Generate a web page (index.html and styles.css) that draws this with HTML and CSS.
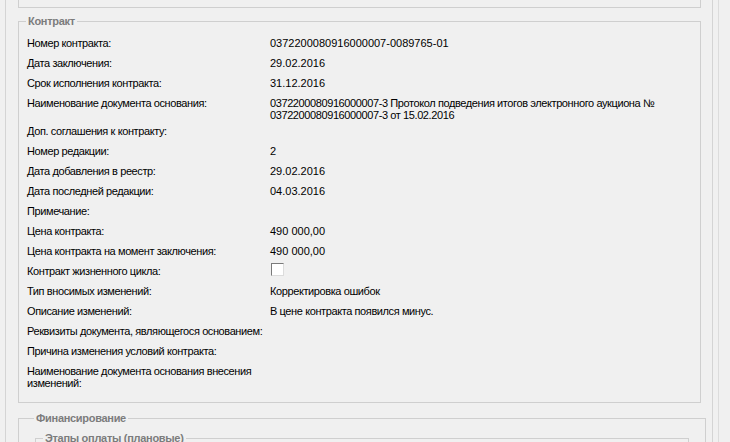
FILE: index.html
```html
<!DOCTYPE html>
<html lang="ru">
<head>
  <meta charset="UTF-8" />
  <title>Контракт</title>
  <link rel="stylesheet" href="styles.css">
</head>
<body>
  <div class="frame">
    <div class="page">
      <div class="prev-box"></div>

      <fieldset class="group contract">
        <legend>Контракт</legend>
        <div class="row"><div class="label">Номер контракта:</div><div class="value num">0372200080916000007-0089765-01</div></div>
        <div class="row"><div class="label">Дата заключения:</div><div class="value num">29.02.2016</div></div>
        <div class="row"><div class="label">Срок исполнения контракта:</div><div class="value num">31.12.2016</div></div>
        <div class="row"><div class="label">Наименование документа основания:</div><div class="value">0372200080916000007-3 Протокол подведения итогов электронного аукциона № 0372200080916000007-3 от 15.02.2016</div></div>
        <div class="row"><div class="label">Доп. соглашения к контракту:</div><div class="value"></div></div>
        <div class="row"><div class="label">Номер редакции:</div><div class="value num">2</div></div>
        <div class="row"><div class="label">Дата добавления в реестр:</div><div class="value num">29.02.2016</div></div>
        <div class="row"><div class="label">Дата последней редакции:</div><div class="value num">04.03.2016</div></div>
        <div class="row"><div class="label">Примечание:</div><div class="value"></div></div>
        <div class="row"><div class="label">Цена контракта:</div><div class="value num">490 000,00</div></div>
        <div class="row"><div class="label">Цена контракта на момент заключения:</div><div class="value num">490 000,00</div></div>
        <div class="row"><div class="label">Контракт жизненного цикла:</div><div class="value"><span class="checkbox"></span></div></div>
        <div class="row"><div class="label">Тип вносимых изменений:</div><div class="value">Корректировка ошибок</div></div>
        <div class="row"><div class="label">Описание изменений:</div><div class="value">В цене контракта появился минус.</div></div>
        <div class="row"><div class="label">Реквизиты документа, являющегося основанием:</div><div class="value"></div></div>
        <div class="row"><div class="label">Причина изменения условий контракта:</div><div class="value"></div></div>
        <div class="row"><div class="label">Наименование документа основания внесения изменений:</div><div class="value"></div></div>
      </fieldset>

      <fieldset class="group finance">
        <legend>Финансирование</legend>
        <fieldset class="group stages">
          <legend>Этапы оплаты (плановые)</legend>
        </fieldset>
      </fieldset>
    </div>
  </div>
</body>
</html>
```

FILE: styles.css
```css
body {
  margin: 0;
  background: #f0f0f0;
  font-family: "Liberation Sans", Arial, sans-serif;
  font-size: 11px;
  color: #000;
  overflow: hidden;
}

.frame {
  width: 718px;
  height: 442px;
  overflow: hidden;
  border-right: 1px solid #dcdcdc;
}

.page {
  margin-left: 5px;
  width: 708px;
  height: 442px;
  padding: 0 0 0 12px;
  box-sizing: border-box;
  border-left: 1px solid #d4d4d4;
  border-right: 1px solid #d4d4d4;
}

.prev-box {
  width: 683px;
  height: 8px;
  box-sizing: border-box;
  border: 1px solid #cfcfcf;
  border-top: none;
}

.group {
  margin: 0;
  border: 1px solid #cfcfcf;
  box-sizing: border-box;
  min-width: 0;
}

.group legend {
  font-weight: bold;
  color: #7c7c7c;
  line-height: 12px;
  padding: 0 2px;
  margin-left: -1px;
  letter-spacing: -0.3px;
}

.contract {
  width: 683px;
  margin-top: 7px;
  padding: 6px 0 13px 8px;
}

.finance {
  width: 688px;
  margin-top: 9px;
  padding: 8px 0 0 16px;
}

.stages {
  width: 654px;
  height: 40px;
  padding: 6px 0 10px 8px;
}

.row {
  display: grid;
  grid-template-columns: 243px 400px;
  min-height: 20px;
  padding-top: 4px;
  box-sizing: border-box;
  line-height: 12px;
}

.label,
.value {
  letter-spacing: -0.4px;
}

.value.num {
  letter-spacing: 0;
}

.checkbox {
  display: inline-block;
  width: 13px;
  height: 13px;
  margin-top: -2px;
  margin-left: 1px;
  box-sizing: border-box;
  background: #fff;
  border: 1px solid #dcdcdc;
  border-top-color: #7a7a7a;
  border-left-color: #7a7a7a;
  vertical-align: top;
}
```
